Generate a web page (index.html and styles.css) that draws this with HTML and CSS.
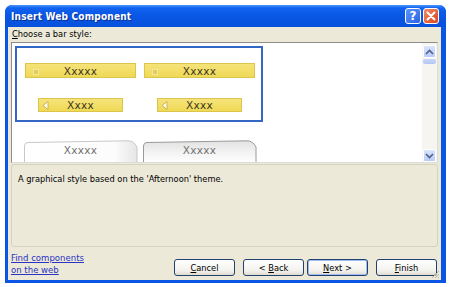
FILE: index.html
```html
<!DOCTYPE html>
<html lang="en">
<head>
    <meta charset="UTF-8">
    <title>Insert Web Component</title>
    <link rel="stylesheet" href="styles.css">
</head>
<body>

<div class="window">
    <div class="titlebar">
        <span class="title">Insert Web Component</span>
        <div class="caption-buttons">
            <span class="cap help">?</span>
            <span class="cap close">
                <svg width="10" height="10" viewBox="0 0 10 10"><path d="M1.5 1.5 L8.5 8.5 M8.5 1.5 L1.5 8.5" stroke="#fff" stroke-width="2" stroke-linecap="round"/></svg>
            </span>
        </div>
    </div>

    <div class="content">
        <div class="prompt"><u>C</u>hoose a bar style:</div>

        <div class="listbox">
            <div class="list-view">
                <div class="selection">
                    <div class="bar-row">
                        <div class="cell"><div class="bar wide"><span class="dot"></span>Xxxxx</div></div>
                        <div class="cell"><div class="bar wide"><span class="dot"></span>Xxxxx</div></div>
                    </div>
                    <div class="bar-row">
                        <div class="cell">
                            <div class="bar narrow">
                                <svg class="arrow" width="7" height="9" viewBox="0 0 7 9"><path d="M6 0.5 L6 8.5 L1 4.5 Z" fill="#fffbe6" stroke="#bfa84a" stroke-width="0.8"/></svg>
                                Xxxx
                            </div>
                        </div>
                        <div class="cell">
                            <div class="bar narrow">
                                <svg class="arrow" width="7" height="9" viewBox="0 0 7 9"><path d="M6 0.5 L6 8.5 L1 4.5 Z" fill="#fffbe6" stroke="#bfa84a" stroke-width="0.8"/></svg>
                                Xxxx
                            </div>
                        </div>
                    </div>
                </div>

                <div class="tab-row">
                    <div class="cell">
                        <div class="tab">
                            <svg class="tab-shape" width="114" height="24" viewBox="0 0 114 24">
                                <defs>
                                    <linearGradient id="tabA" x1="0" y1="0" x2="1" y2="0">
                                        <stop offset="0" stop-color="#ffffff"/>
                                        <stop offset="0.8" stop-color="#fcfcfc"/>
                                        <stop offset="1" stop-color="#e6e6e6"/>
                                    </linearGradient>
                                </defs>
                                <path d="M0.5 24 V6 Q0.5 2.5 4 2.5 L104 0.8 Q110 0.8 113 7 V24" fill="url(#tabA)" stroke="#c8c8c8"/>
                            </svg>
                            <span class="tab-text">Xxxxx</span>
                        </div>
                    </div>
                    <div class="cell">
                        <div class="tab">
                            <svg class="tab-shape" width="114" height="24" viewBox="0 0 114 24">
                                <defs>
                                    <linearGradient id="tabB" x1="0" y1="0" x2="0" y2="1">
                                        <stop offset="0" stop-color="#e2e2e2"/>
                                        <stop offset="0.5" stop-color="#f3f3f3"/>
                                        <stop offset="1" stop-color="#ffffff"/>
                                    </linearGradient>
                                </defs>
                                <path d="M0.5 24 V6 Q0.5 2.5 4 2.5 L104 0.8 Q110 0.8 113 7 V24" fill="url(#tabB)" stroke="#9a9a9a"/>
                            </svg>
                            <span class="tab-text">Xxxxx</span>
                        </div>
                    </div>
                </div>
            </div>

            <div class="scrollbar">
                <div class="sb-button">
                    <svg width="9" height="6" viewBox="0 0 9 6"><path d="M1 5 L4.5 1.5 L8 5" fill="none" stroke="#4d6185" stroke-width="1.6"/></svg>
                </div>
                <div class="sb-thumb"></div>
                <div class="sb-track"></div>
                <div class="sb-button">
                    <svg width="9" height="6" viewBox="0 0 9 6"><path d="M1 1 L4.5 4.5 L8 1" fill="none" stroke="#4d6185" stroke-width="1.6"/></svg>
                </div>
            </div>
        </div>

        <div class="description">A graphical style based on the 'Afternoon' theme.</div>

        <div class="footer">
            <a class="find-link" href="#">Find components<br>on the web</a>
            <div class="buttons">
                <button class="btn"><u>C</u>ancel</button>
                <button class="btn back">&lt; <u>B</u>ack</button>
                <button class="btn default"><u>N</u>ext &gt;</button>
                <button class="btn finish"><u>F</u>inish</button>
            </div>
        </div>

        <svg class="grip" width="10" height="10" viewBox="0 0 10 10">
            <path d="M9 2 L2 9 M9 5 L5 9 M9 8 L8 9" stroke="#b9b5a3" stroke-width="1"/>
        </svg>
    </div>
</div>

</body>
</html>
```

FILE: styles.css
```css
body {
    margin: 0;
    background-color: #fff;
    font-family: "DejaVu Sans Condensed", "DejaVu Sans", sans-serif;
    font-stretch: condensed;
    font-size: 9.2px;
    color: #000;
}
.window {
    margin: 5px 0 0 5px;
    width: 441px;
    height: 278px;
    padding: 0 5px 3px 3px;
    box-sizing: border-box;
    background-color: #0a55e3;
    border-radius: 7px 7px 0 0;
    display: flex;
    flex-direction: column;
}
.titlebar {
    height: 22px;
    margin: 0 -5px 0 -3px;
    padding: 0 7px 0 6px;
    display: flex;
    align-items: center;
    justify-content: space-between;
    border-radius: 7px 7px 0 0;
    background: linear-gradient(#4c95ff 0, #1162ee 3px, #0a58e6 45%, #0651dc 100%);
}
.title {
    color: #fff;
    font-weight: bold;
    font-size: 10px;
    letter-spacing: 0.2px;
    text-shadow: 1px 1px 0 #0a2f8c;
}
.caption-buttons {
    display: flex;
    gap: 2px;
}
.cap {
    width: 16px;
    height: 16px;
    box-sizing: border-box;
    border: 1px solid #fff;
    border-radius: 3px;
    display: flex;
    align-items: center;
    justify-content: center;
    color: #fff;
    font-family: "DejaVu Sans", sans-serif;
    font-stretch: normal;
    font-weight: bold;
    font-size: 12px;
}
.help {
    background: linear-gradient(135deg, #5b95ff, #2c63e0);
}
.close {
    background: linear-gradient(135deg, #f08c66, #d9441c);
}
.content {
    flex: 1;
    position: relative;
    background-color: #ece9d8;
    padding: 0 3px;
    display: flex;
    flex-direction: column;
}
.prompt {
    height: 15px;
    line-height: 14px;
    padding-left: 1px;
}
.listbox {
    height: 121px;
    box-sizing: border-box;
    border: 1px solid #8d8d8d;
    border-right-color: #dcdcdc;
    border-bottom-color: #dcdcdc;
    background-color: #fff;
    display: flex;
    overflow: hidden;
}
.list-view {
    flex: 1;
    padding: 3px 0 0 3px;
    overflow: hidden;
}
.selection {
    width: 248px;
    height: 76px;
    box-sizing: border-box;
    border: 2px solid #3466c4;
    padding: 15px 0 0 4px;
    display: flex;
    flex-direction: column;
    gap: 20px;
}
.bar-row, .tab-row {
    display: flex;
}
.cell {
    width: 119px;
    display: flex;
    justify-content: center;
}
.bar {
    position: relative;
    box-sizing: border-box;
    background: linear-gradient(#f6e37a, #efd955);
    border: 1px solid #dcc54c;
    display: flex;
    align-items: center;
    justify-content: center;
    font-family: "DejaVu Sans", sans-serif;
    font-stretch: normal;
    font-size: 10.5px;
    letter-spacing: 0.3px;
    color: #3a3520;
}
.bar.wide {
    width: 111px;
    height: 15px;
}
.bar.narrow {
    width: 85px;
    height: 14px;
}
.dot {
    position: absolute;
    left: 7px;
    top: 5px;
    width: 4px;
    height: 4px;
    background-color: #e4cc5c;
    border: 1px solid #f4e7a0;
}
.arrow {
    position: absolute;
    left: 3px;
    top: 2px;
}
.tab-row {
    margin-top: 18px;
    padding-left: 6px;
}
.tab {
    position: relative;
    width: 114px;
    height: 24px;
    display: flex;
    justify-content: center;
}
.tab-shape {
    position: absolute;
    left: 0;
    top: 0;
}
.tab-text {
    position: relative;
    margin-top: 4px;
    font-family: "DejaVu Sans", sans-serif;
    font-stretch: normal;
    font-size: 10.5px;
    letter-spacing: 0.3px;
    color: #707070;
}
.scrollbar {
    width: 15px;
    background-color: #f6f5f0;
    display: flex;
    flex-direction: column;
    padding-top: 2px;
}
.sb-button {
    height: 13px;
    margin: 0 1px;
    box-sizing: border-box;
    border: 1px solid #fff;
    border-radius: 2px;
    background: linear-gradient(#d9e4fd, #b7cbf7);
    display: flex;
    align-items: center;
    justify-content: center;
}
.sb-thumb {
    height: 5px;
    margin: 1px 1px 0;
    border-radius: 2px;
    background: linear-gradient(#c9d7fa, #b4c7f3);
}
.sb-track {
    flex: 1;
}
.description {
    height: 83px;
    margin-top: 1px;
    box-sizing: border-box;
    border: 1px solid #d6d2c0;
    border-radius: 3px;
    padding: 8px 6px;
}
.footer {
    flex: 1;
    display: flex;
    justify-content: space-between;
    align-items: flex-end;
    padding-bottom: 4px;
}
.find-link {
    color: #2a33c4;
    font-size: 9.5px;
    line-height: 12px;
    margin-bottom: 0;
}
.buttons {
    display: flex;
    margin-right: 1px;
}
.btn {
    width: 61px;
    height: 17px;
    padding: 0;
    box-sizing: border-box;
    border: 1px solid #23416e;
    border-radius: 3px;
    background: linear-gradient(#ffffff, #f3f2ed 70%, #dedbd0);
    font-family: inherit;
    font-stretch: condensed;
    font-size: 9.2px;
    color: #000;
}
.btn.back {
    margin-left: 8px;
}
.btn.default {
    margin-left: 3px;
    box-shadow: inset 0 0 0 1px #9fbdf2;
}
.btn.finish {
    margin-left: 8px;
}
.grip {
    position: absolute;
    right: 1px;
    bottom: 1px;
}
```
